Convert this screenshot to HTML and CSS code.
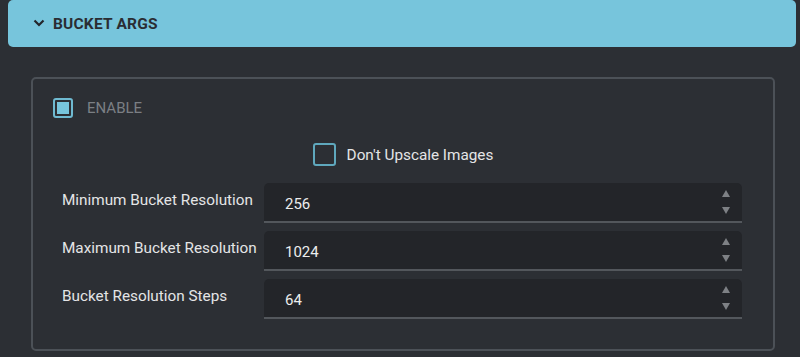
FILE: index.html
```html
<!DOCTYPE html>
<html lang="en">
<head>
  <meta charset="UTF-8" />
  <meta name="viewport" content="width=device-width, initial-scale=1.0" />
  <title>Bucket Args</title>
  <link rel="stylesheet" href="styles.css">
</head>

<body>
  <!-- HEADER -->
  <header class="section-head">
    <svg class="chevron" width="12" height="8" viewBox="0 0 12 8">
      <path d="M1.5 1.5 L6 6 L10.5 1.5" fill="none" stroke="#23262b" stroke-width="2.2" />
    </svg>
    <h2>BUCKET ARGS</h2>
  </header>

  <!-- PANEL -->
  <div class="section-body">
    <div class="panel">
      <label class="enable">
        <span class="check check-on"><span></span></span>
        ENABLE
      </label>

      <label class="upscale">
        <span class="check"></span>
        Don't Upscale Images
      </label>

      <div class="row">
        <span class="row-label">Minimum Bucket Resolution</span>
        <div class="num-input">
          <span class="value">256</span>
          <span class="spin"><i class="up"></i><i class="down"></i></span>
        </div>
      </div>

      <div class="row">
        <span class="row-label">Maximum Bucket Resolution</span>
        <div class="num-input">
          <span class="value">1024</span>
          <span class="spin"><i class="up"></i><i class="down"></i></span>
        </div>
      </div>

      <div class="row">
        <span class="row-label">Bucket Resolution Steps</span>
        <div class="num-input">
          <span class="value">64</span>
          <span class="spin"><i class="up"></i><i class="down"></i></span>
        </div>
      </div>
    </div>
  </div>
</body>
</html>
```

FILE: styles.css
```css
body {
  margin: 0;
  font-family: Roboto, "Liberation Sans", sans-serif;
  background: #2c2f34;
  color: #e4e5e6;
}

/* HEADER */
.section-head {
  margin: 0 4px 0 8px;
  height: 47px;
  background: #77c5dc;
  border-radius: 5px;
  display: flex;
  align-items: center;
  padding-left: 25px;
}

.chevron {
  margin-right: 8px;
  margin-top: -1px;
}

.section-head h2 {
  margin: 0;
  font-size: 15.5px;
  font-weight: bold;
  color: #2a2d33;
  letter-spacing: 0.2px;
}

/* PANEL */
.section-body {
  padding: 30px 25px 0 31px;
}

.panel {
  border: 2px solid #4c5157;
  border-radius: 5px;
  padding: 19px 20px 30px 20px;
  display: flex;
  flex-direction: column;
}

.check {
  width: 19px;
  height: 19px;
  border: 2px solid #5fa8bd;
  border-radius: 3px;
  display: flex;
  align-items: center;
  justify-content: center;
}

.check-on {
  width: 16px;
  height: 16px;
  border-color: #6fbad1;
}

.check-on span {
  width: 12px;
  height: 12px;
  background: #77c5dc;
}

.enable {
  display: flex;
  align-items: center;
  gap: 14px;
  font-size: 15px;
  color: #7b7f84;
  height: 20px;
}

.upscale {
  align-self: center;
  display: flex;
  align-items: center;
  gap: 11px;
  margin-top: 25px;
  font-size: 15.3px;
  color: #e4e5e6;
}

/* ROWS */
.row {
  display: flex;
  align-items: flex-start;
  margin: 17px 11px 0 9px;
}

.row + .row {
  margin-top: 8px;
}

.row-label {
  width: 202px;
  flex-shrink: 0;
  font-size: 15.3px;
  padding-top: 8px;
}

.num-input {
  flex: 1;
  height: 38px;
  background: #232529;
  border-bottom: 2px solid #53575c;
  border-radius: 5px 5px 0 0;
  display: flex;
  align-items: center;
  justify-content: space-between;
  padding: 0 12px 0 21px;
}

.value {
  font-size: 15px;
  color: #eceded;
  padding-top: 3px;
}

.spin {
  display: flex;
  flex-direction: column;
  justify-content: space-between;
  height: 24px;
}

.spin i {
  width: 0;
  height: 0;
  border-left: 4px solid transparent;
  border-right: 4px solid transparent;
}

.spin .up {
  border-bottom: 7px solid #7e8185;
}

.spin .down {
  border-top: 7px solid #7e8185;
}
```
